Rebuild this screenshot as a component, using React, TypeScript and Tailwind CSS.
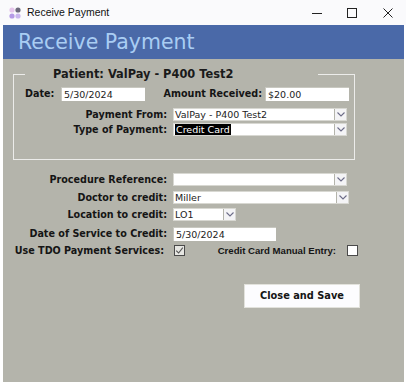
import React from "react";

const F = "font-['DejaVu_Sans',sans-serif]";

function Chevron() {
  return (
    <svg width="8" height="5" viewBox="0 0 8 5">
      <path d="M0.5 0.5 L4 4 L7.5 0.5" fill="none" stroke="#6c6c88" strokeWidth="1.1" />
    </svg>
  );
}

function Select({ w, children }: { w: string; children?: React.ReactNode }) {
  return (
    <div className={`${w} h-[13px] flex bg-white border border-[#d8d8d2]`}>
      <div className={`flex-1 flex items-center pl-[1px] text-[9.5px] leading-none text-[#222] ${F} overflow-hidden whitespace-nowrap`}>
        {children}
      </div>
      <div className="w-[12px] flex items-center justify-center bg-[#f4f4f6] border-l border-[#b4b4ab]">
        <Chevron />
      </div>
    </div>
  );
}

function Input({ w, value }: { w: string; value?: string }) {
  return (
    <div className={`${w} h-[14px] flex items-center pl-[2px] bg-white border-t border-l border-[#c8c8c0] text-[9.5px] leading-none text-[#222] ${F} whitespace-nowrap`}>
      {value}
    </div>
  );
}

function Label({ w, children, left }: { w: string; children: React.ReactNode; left?: boolean }) {
  return (
    <div className={`${w} shrink-0 ${left ? "text-left pl-[11px]" : "text-right"} text-[9.6px] font-bold leading-none text-[#151515] ${F} whitespace-nowrap`}>
      {children}
    </div>
  );
}

function Check({ checked }: { checked?: boolean }) {
  return (
    <div className={`w-[11px] h-[11px] border border-[#4a4a4a] flex items-center justify-center ${checked ? "bg-[#e6e6e2]" : "bg-white"}`}>
      {checked && (
        <svg width="9" height="9" viewBox="0 0 9 9">
          <path d="M1.2 4.6 L3.6 7 L7.8 1.6" fill="none" stroke="#555" strokeWidth="1.1" />
        </svg>
      )}
    </div>
  );
}

export default function App() {
  return (
    <div className="w-[406px] h-[382px] bg-white overflow-hidden">
      {/* Title bar */}
      <div className="h-[25px] bg-[#fafafc] flex items-center relative">
        <svg className="ml-[9px]" width="12" height="12" viewBox="0 0 12 12">
          <circle cx="3" cy="3" r="2.6" fill="#e6c6ec" />
          <circle cx="9" cy="3" r="2.6" fill="#6d6a7c" />
          <circle cx="3" cy="9" r="2.6" fill="#b59ae6" />
          <circle cx="9" cy="9" r="2.6" fill="#c9b6ee" />
        </svg>
        <span className="ml-[6px] text-[10.5px] text-[#111] font-['Liberation_Sans',sans-serif]">Receive Payment</span>
        <div className="flex-1" />
        <svg width="12" height="12" viewBox="0 0 12 12" className="mr-[23px]">
          <path d="M1 6.5 H11" stroke="#222" strokeWidth="1" />
        </svg>
        <svg width="12" height="12" viewBox="0 0 12 12" className="mr-[24px]">
          <rect x="1.5" y="1.5" width="9" height="9" fill="none" stroke="#222" strokeWidth="1" />
        </svg>
        <svg width="12" height="12" viewBox="0 0 12 12" className="mr-[12px]">
          <path d="M1.5 1.5 L10.5 10.5 M10.5 1.5 L1.5 10.5" stroke="#222" strokeWidth="1" />
        </svg>
      </div>

      <div className="ml-[3px] w-[401px] h-[357px] flex flex-col">
        {/* Header */}
        <div className="h-[34px] bg-[#4a69a8] flex items-center pl-[15px]">
          <span className={`text-[20.5px] leading-none text-[#a9cdf3] ${F}`}>Receive Payment</span>
        </div>

        {/* Body */}
        <div className="flex-1 bg-[#b4b4ab] flex flex-col">
          {/* Group box */}
          <div className="ml-[10px] mt-[8px] w-[342px]">
            <div className="flex h-[14px]">
              <div className="w-[12px] h-[7px] self-end border-l border-t border-[#ececea]" />
              <div className={`w-[293px] pl-[28px] text-[11.4px] font-bold leading-[14px] text-[#1a1a1a] ${F} whitespace-nowrap`}>
                Patient: ValPay - P400 Test2
              </div>
              <div className="flex-1 h-[7px] self-end border-t border-r border-[#ececea]" />
            </div>
            <div className="h-[79px] border-l border-r border-b border-[#ececea] flex flex-col">
              <div className="mt-[6px] flex items-center">
                <Label w="w-[47px]" left>Date:</Label>
                <Input w="w-[84px]" value="5/30/2024" />
                <Label w="w-[117px]">Amount Received:</Label>
                <div className="w-[3px]" />
                <Input w="w-[84px]" value="$20.00" />
              </div>
              <div className="mt-[7px] flex items-center">
                <Label w="w-[153px]">Payment From:</Label>
                <div className="w-[6px]" />
                <Select w="w-[174px]">ValPay - P400 Test2</Select>
              </div>
              <div className="mt-[2px] flex items-center">
                <Label w="w-[153px]">Type of Payment:</Label>
                <div className="w-[6px]" />
                <Select w="w-[174px]">
                  <span className="bg-black text-white px-[1px] leading-[11px]">Credit Card</span>
                </Select>
              </div>
            </div>
          </div>

          {/* Lower fields */}
          <div className="mt-[13px] flex items-center">
            <Label w="w-[164px]">Procedure Reference:</Label>
            <div className="w-[6px]" />
            <Select w="w-[174px]" />
          </div>
          <div className="mt-[5px] flex items-center">
            <Label w="w-[164px]">Doctor to credit:</Label>
            <div className="w-[6px]" />
            <Select w="w-[176px]">Miller</Select>
          </div>
          <div className="mt-[4px] flex items-center">
            <Label w="w-[164px]">Location to credit:</Label>
            <div className="w-[6px]" />
            <Select w="w-[63px]">LO1</Select>
          </div>
          <div className="mt-[6px] flex items-center">
            <Label w="w-[164px]">Date of Service to Credit:</Label>
            <div className="w-[6px]" />
            <Input w="w-[103px]" value="5/30/2024" />
          </div>
          <div className="mt-[4px] flex items-center">
            <Label w="w-[161px]">Use TDO Payment Services:</Label>
            <div className="w-[10px]" />
            <Check checked />
            <div className="w-[151px] shrink-0 text-right text-[9.6px] font-bold leading-none text-[#151515] font-['Liberation_Sans',sans-serif] whitespace-nowrap">
              Credit Card Manual Entry:
            </div>
            <div className="w-[11px]" />
            <Check />
          </div>

          <div className="mt-[25px] ml-[241px]">
            <button className={`w-[116px] h-[24px] bg-[#fcfcfe] border border-[#e2e2dc] text-[9.8px] font-bold text-[#151515] ${F}`}>
              Close and Save
            </button>
          </div>
        </div>
      </div>
    </div>
  );
}
